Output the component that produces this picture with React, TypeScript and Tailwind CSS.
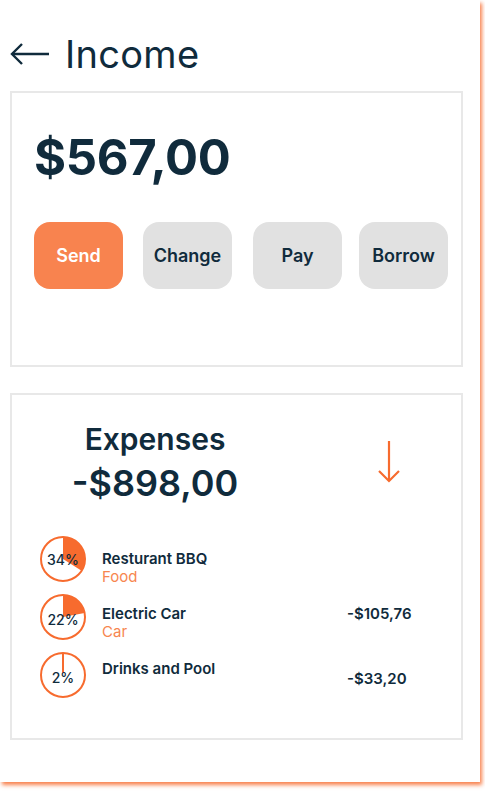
import React from 'react';

const ink = 'text-[#102b3c]';

const actions = [
  { label: 'Send', primary: true, ml: 'ml-[22px]' },
  { label: 'Change', primary: false, ml: 'ml-[20px]' },
  { label: 'Pay', primary: false, ml: 'ml-[21px]' },
  { label: 'Borrow', primary: false, ml: 'ml-[17px]' },
];

// offsets tuned by eye: text blocks don't sit centred on the pies
const expenses = [
  { pct: 34, name: 'Resturant BBQ', category: 'Food', amount: '', textPt: 'pt-[14px]', amtPt: '' },
  { pct: 22, name: 'Electric Car', category: 'Car', amount: '-$105,76', textPt: 'pt-[11px]', amtPt: 'pt-[11px]' },
  { pct: 2, name: 'Drinks and Pool', category: '', amount: '-$33,20', textPt: 'pt-[8px]', amtPt: 'pt-[18px]' },
];

const Pie = ({ pct }: { pct: number }) => {
  const r = 22;
  const c = 23;
  const angle = (pct / 100) * Math.PI * 2;
  const x = c + r * Math.sin(angle);
  const y = c - r * Math.cos(angle);
  const large = pct > 50 ? 1 : 0;
  return (
    <div className="relative w-[46px] h-[46px] shrink-0">
      <svg width="46" height="46" viewBox="0 0 46 46" className="absolute inset-0">
        <circle cx={c} cy={c} r={r} fill="white" stroke="#f76b2e" strokeWidth="2" />
        {pct <= 3 ? (
          <line x1={c} y1={c - 2} x2={c} y2={c - r} stroke="#f76b2e" strokeWidth="2" />
        ) : (
          <path d={`M${c} ${c} L${c} ${c - r} A${r} ${r} 0 ${large} 1 ${x} ${y} Z`} fill="#f76b2e" />
        )}
      </svg>
      <span
        className={`absolute inset-0 flex items-center justify-center text-[14px] font-medium ${ink} ${
          pct < 30 ? 'pt-[5px]' : ''
        }`}
      >
        {pct}%
      </span>
    </div>
  );
};

export default function App() {
  return (
    <div className="pb-[10px]">
      <div
        className={`w-[480px] h-[782px] bg-white shadow-[2px_3px_4px_rgba(247,107,46,0.85)] ${ink}`}
        style={{ fontFamily: 'Inter, "Noto Sans", sans-serif' }}
      >
        <div className="pt-[34px] h-[74px] flex items-center pl-[10px]">
          <svg width="40" height="24" viewBox="0 0 40 24" fill="none" stroke="#102b3c" strokeWidth="2.4">
            <path d="M39 12H2" />
            <path d="M12 2L2 12l10 10" strokeLinejoin="miter" />
          </svg>
          <h1 className="ml-[15px] text-[38px] font-normal leading-none tracking-[0.3px]">Income</h1>
        </div>

        <div className="mt-[17px] ml-[10px] w-[453px] h-[276px] border-2 border-[#e8e8e8]">
          <div className="pl-[22px] pt-[40px] text-[49px] font-bold leading-none tracking-[-0.3px]">$567,00</div>
          <div className="flex mt-[40px]">
            {actions.map((a) => (
              <button
                key={a.label}
                className={`${a.ml} w-[89px] h-[67px] rounded-[16px] text-[18px] font-semibold ${
                  a.primary ? 'bg-[#f8834f] text-white' : 'bg-[#e1e1e1] text-[#102b3c]'
                }`}
              >
                {a.label}
              </button>
            ))}
          </div>
        </div>

        <div className="mt-[26px] ml-[10px] w-[453px] h-[347px] border-2 border-[#e8e8e8]">
          <div className="flex pt-[26px]">
            <div className="w-[286px] text-center">
              <div className="text-[30px] font-semibold leading-[36px]">Expenses</div>
              <div className="text-[36px] font-semibold leading-[40px] mt-[6px]">-$898,00</div>
            </div>
            <div className="ml-[79px] mt-[20px]">
              <svg width="24" height="42" viewBox="0 0 24 42" fill="none" stroke="#f76b2e" strokeWidth="2.2">
                <path d="M12 0v40" />
                <path d="M2 30l10 10 10-10" />
              </svg>
            </div>
          </div>

          <div className="mt-[33px] pl-[28px] pr-[40px] flex flex-col gap-[12px]">
            {expenses.map((e) => (
              <div key={e.name} className="flex items-start h-[46px]">
                <Pie pct={e.pct} />
                <div className={`ml-[16px] w-[245px] ${e.textPt}`}>
                  <div className="text-[15px] font-semibold leading-[18px]">{e.name}</div>
                  {e.category && <div className="text-[15px] text-[#f7864f] leading-[18px]">{e.category}</div>}
                </div>
                <div className={`text-[15px] font-semibold leading-[18px] ${e.amtPt}`}>{e.amount}</div>
              </div>
            ))}
          </div>
        </div>
      </div>
    </div>
  );
}
